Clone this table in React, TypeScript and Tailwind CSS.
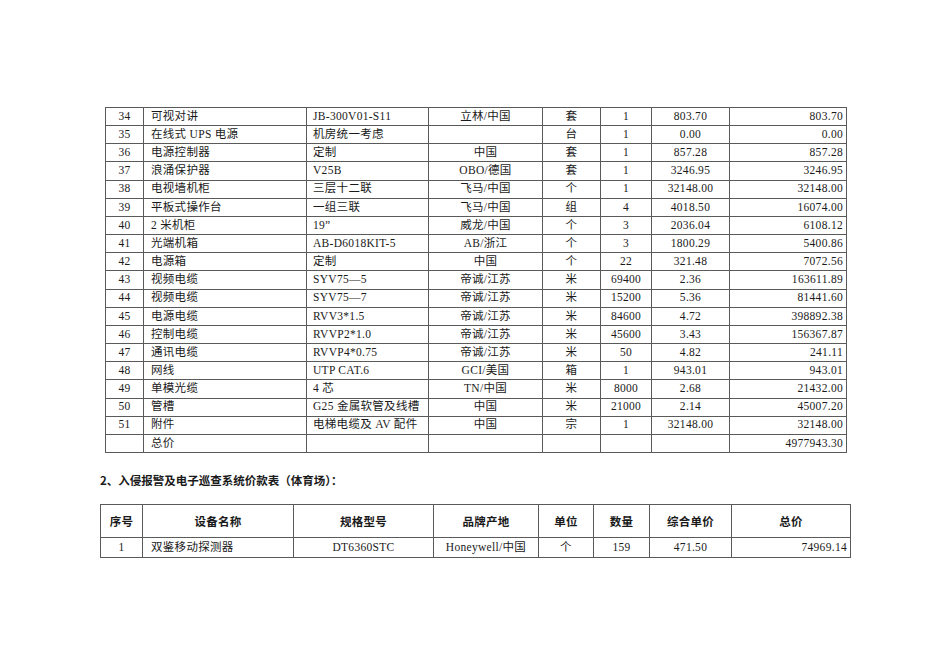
const rows = [
  ["34", "可视对讲", "JB-300V01-S11", "立林/中国", "套", "1", "803.70", "803.70"],
  ["35", "在线式 UPS 电源", "机房统一考虑", "", "台", "1", "0.00", "0.00"],
  ["36", "电源控制器", "定制", "中国", "套", "1", "857.28", "857.28"],
  ["37", "浪涌保护器", "V25B", "OBO/德国", "套", "1", "3246.95", "3246.95"],
  ["38", "电视墙机柜", "三层十二联", "飞马/中国", "个", "1", "32148.00", "32148.00"],
  ["39", "平板式操作台", "一组三联", "飞马/中国", "组", "4", "4018.50", "16074.00"],
  ["40", "2 米机柜", "19”", "威龙/中国", "个", "3", "2036.04", "6108.12"],
  ["41", "光端机箱", "AB-D6018KIT-5", "AB/浙江", "个", "3", "1800.29", "5400.86"],
  ["42", "电源箱", "定制", "中国", "个", "22", "321.48", "7072.56"],
  ["43", "视频电缆", "SYV75—5", "帝诚/江苏", "米", "69400", "2.36", "163611.89"],
  ["44", "视频电缆", "SYV75—7", "帝诚/江苏", "米", "15200", "5.36", "81441.60"],
  ["45", "电源电缆", "RVV3*1.5", "帝诚/江苏", "米", "84600", "4.72", "398892.38"],
  ["46", "控制电缆", "RVVP2*1.0", "帝诚/江苏", "米", "45600", "3.43", "156367.87"],
  ["47", "通讯电缆", "RVVP4*0.75", "帝诚/江苏", "米", "50", "4.82", "241.11"],
  ["48", "网线", "UTP CAT.6", "GCI/美国", "箱", "1", "943.01", "943.01"],
  ["49", "单模光缆", "4 芯", "TN/中国", "米", "8000", "2.68", "21432.00"],
  ["50", "管槽", "G25 金属软管及线槽", "中国", "米", "21000", "2.14", "45007.20"],
  ["51", "附件", "电梯电缆及 AV 配件", "中国", "宗", "1", "32148.00", "32148.00"],
  ["", "总价", "", "", "", "", "", "4977943.30"],
];

const font = { fontFamily: '"Liberation Serif", "Noto Sans CJK SC", serif' };
const bold = { fontFamily: '"Noto Sans CJK SC", "Liberation Sans", sans-serif' };

const cell = "border border-[#5a5a5a] p-0 leading-none whitespace-nowrap overflow-hidden";

export default function App() {
  return (
    <div className="w-[950px] h-[672px] bg-white text-[#1a1a1a] pt-[107px] pl-[100px]" style={font}>
      <table className="ml-[5px] w-[741px] table-fixed border-collapse text-[11.5px] tracking-[0.3px]">
        <colgroup>
          <col className="w-[38px]" />
          <col className="w-[163px]" />
          <col className="w-[122px]" />
          <col className="w-[114px]" />
          <col className="w-[58px]" />
          <col className="w-[51px]" />
          <col className="w-[78px]" />
          <col className="w-[117px]" />
        </colgroup>
        <tbody>
          {rows.map((r, i) => (
            <tr key={i} className="h-[18.16px]">
              <td className={cell + " text-center"}>{r[0]}</td>
              <td className={cell + " pl-[7px]"}>{r[1]}</td>
              <td className={cell + " pl-[6px]"}>{r[2]}</td>
              <td className={cell + " text-center"}>{r[3]}</td>
              <td className={cell + " text-center"}>{r[4]}</td>
              <td className={cell + " text-center"}>{r[5]}</td>
              <td className={cell + " text-center"}>{r[6]}</td>
              <td className={cell + " text-right pr-[3px]"}>{r[7]}</td>
            </tr>
          ))}
        </tbody>
      </table>

      {/* second section */}
      <div className="mt-[22px] text-[11.5px] font-bold leading-none" style={bold}>
        2、入侵报警及电子巡查系统价款表（体育场）：
      </div>

      <table className="mt-[18px] w-[750px] table-fixed border-collapse text-[11.5px] tracking-[0.3px]">
        <colgroup>
          <col className="w-[42px]" />
          <col className="w-[151px]" />
          <col className="w-[140px]" />
          <col className="w-[105px]" />
          <col className="w-[55px]" />
          <col className="w-[56px]" />
          <col className="w-[82px]" />
          <col className="w-[119px]" />
        </colgroup>
        <tbody>
          <tr className="h-[33px] font-bold" style={bold}>
            {["序号", "设备名称", "规格型号", "品牌产地", "单位", "数量", "综合单价", "总价"].map((h) => (
              <td key={h} className={cell + " text-center"}>{h}</td>
            ))}
          </tr>
          <tr className="h-[20px]">
            <td className={cell + " text-center"}>1</td>
            <td className={cell + " pl-[8px]"}>双鉴移动探测器</td>
            <td className={cell + " text-center"}>DT6360STC</td>
            <td className={cell + " text-center"}>Honeywell/中国</td>
            <td className={cell + " text-center"}>个</td>
            <td className={cell + " text-center"}>159</td>
            <td className={cell + " text-center"}>471.50</td>
            <td className={cell + " text-right pr-[3px]"}>74969.14</td>
          </tr>
        </tbody>
      </table>
    </div>
  );
}
